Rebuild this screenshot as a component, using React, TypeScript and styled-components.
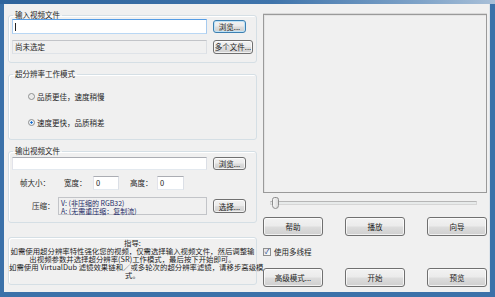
import * as React from 'react';
import styled, { createGlobalStyle, css } from 'styled-components';

const GlobalStyle = createGlobalStyle`
    html, body {
        margin: 0;
        padding: 0;
        background: #f0f0f0;
    }
    body {
        font-family: "Noto Sans CJK SC", "Liberation Sans", sans-serif;
        font-size: 7.5px;
        color: #1e1e1e;
    }
    * {
        box-sizing: border-box;
    }
`;

const Window = styled.div`
    width: 495px;
    height: 297px;
    padding: 4px 5px 5px 4px;
    background:
        linear-gradient(90deg, #2f649c 0%, #3f74ab 55%, #7fa3c8 85%, #a9c0d8 100%) top / 100% 4px no-repeat,
        #3b71a9;
`;

const Client = styled.div`
    height: 100%;
    display: flex;
    padding: 7px 0 0 4px;
    background: #f0f0f0;
    border-right: 1px solid #dde4ea;
`;

const LeftCol = styled.div`
    width: 249px;
    display: flex;
    flex-direction: column;
`;

const RightCol = styled.div`
    width: 224px;
    margin-left: 6px;
    display: flex;
    flex-direction: column;
`;

const Group = styled.fieldset<{ $height: number; $mt?: number }>`
    margin: ${p => p.$mt || 0}px 0 0 0;
    padding: 0;
    height: ${p => p.$height}px;
    border: 1px solid #d5dfe5;
    border-radius: 3px;
    box-shadow: inset 1px 1px 0 #fff;
    min-width: 0;
`;

const Legend = styled.legend`
    margin-left: 4px;
    padding: 0 2px;
    font-size: 7.5px;
    line-height: 8px;
    color: #1e1e1e;
`;

const GroupBody = styled.div<{ $pt?: number; $pl?: number }>`
    padding: ${p => p.$pt || 0}px 0 0 ${p => p.$pl ?? 3}px;
    display: flex;
    flex-direction: column;
`;

const FieldRow = styled.div<{ $mt?: number; $h?: number }>`
    display: flex;
    align-items: center;
    margin-top: ${p => p.$mt || 0}px;
    height: ${p => p.$h || 15}px;
`;

const TextBox = styled.div<{ $w: number; $h: number; $focused?: boolean; $readonly?: boolean }>`
    width: ${p => p.$w}px;
    height: ${p => p.$h}px;
    flex-shrink: 0;
    display: flex;
    align-items: center;
    padding-left: 2px;
    line-height: 8px;
    background: ${p => (p.$readonly ? '#f0f0f0' : '#fff')};
    border: 1px solid #abadb3;
    border-color: #abadb3 #dbdfe6 #e3e9ef #e2e3ea;
    ${p => p.$focused && css`
        border-color: #569de5 #a7cbef #b9d7f4 #a7cbef;
    `}
    ${p => p.$readonly && css`
        border-color: #c2c4c8 #dcdfe3 #dfe3e8 #dcdfe3;
    `}
`;

const Caret = styled.span`
    display: inline-block;
    width: 1px;
    height: 8px;
    background: #222;
`;

const Button = styled.div<{ $w: number; $h: number; $ml?: number; $default?: boolean }>`
    width: ${p => p.$w}px;
    height: ${p => p.$h}px;
    margin-left: ${p => p.$ml ?? 0}px;
    flex-shrink: 0;
    display: flex;
    align-items: center;
    justify-content: center;
    font-size: 7.5px;
    color: #1e1e1e;
    border: 1px solid #707070;
    border-radius: 3px;
    background: linear-gradient(#f2f2f2 0%, #ebebeb 48%, #dddddd 52%, #cfcfcf 100%);
    box-shadow: inset 0 0 0 1px rgba(255, 255, 255, 0.7);
    ${p => p.$default && css`
        border-color: #3c7fb1;
        box-shadow: inset 0 0 0 1px #bfe3f7;
    `}
`;

const RadioRow = styled.div<{ $mt?: number }>`
    display: flex;
    align-items: center;
    height: 10px;
    margin-top: ${p => p.$mt || 0}px;
`;

const RadioDot = styled.span<{ $checked?: boolean }>`
    width: 7px;
    height: 7px;
    margin-right: 2px;
    border-radius: 50%;
    border: 1px solid #8e8f8f;
    background: radial-gradient(circle, ${p => (p.$checked ? '#1a62c4 0, #3b8fe0 35%, #e6eef6 40%' : '#e6e6e6 0')}, #f4f4f4 100%);
`;

const Label = styled.span<{ $ml?: number; $w?: number }>`
    margin-left: ${p => p.$ml || 0}px;
    ${p => p.$w && css`width: ${p.$w}px;`}
    flex-shrink: 0;
    white-space: nowrap;
    line-height: 8px;
`;

const CodecBox = styled.div`
    width: 149px;
    height: 18px;
    margin-left: 8px;
    padding: 1px 0 0 2px;
    flex-shrink: 0;
    background: #f0f0f0;
    border: 1px solid #c2c4c8;
    color: #1f2c66;
    line-height: 8px;
    font-size: 7px;
`;

const GuideBox = styled.div`
    margin-top: 14px;
    height: 48px;
    padding-top: 1px;
    border: 1px solid #d5dfe5;
    border-radius: 3px;
    box-shadow: inset 1px 1px 0 #fff;
    text-align: center;
    font-size: 7.4px;
    line-height: 8px;
`;

const GuideLine = styled.div`
    white-space: nowrap;
`;

const Preview = styled.div`
    margin-top: 3px;
    height: 179px;
    border: 1px solid #9a9a9a;
    box-shadow: 0 -1px 0 #d8d8d8, inset 1px 1px 0 #e4e4e4;
    background: #f0f0f0;
`;

const Slider = styled.div`
    position: relative;
    margin-top: 3px;
    height: 14px;
    padding: 0 10px 0 7px;
    display: flex;
    align-items: center;
`;

const Track = styled.div`
    flex: 1;
    height: 4px;
    border: 1px solid #d6d6d6;
    border-top-color: #b6b6b6;
    background: #e7eaea;
`;

const Thumb = styled.div`
    position: absolute;
    left: 9px;
    top: 1px;
    width: 7px;
    height: 12px;
    border: 1px solid #8c8c8c;
    border-radius: 3px 3px 4px 4px;
    background: linear-gradient(90deg, #f6f6f6, #dcdcdc);
`;

const ButtonRow = styled.div<{ $mt: number }>`
    display: flex;
    justify-content: space-between;
    margin-top: ${p => p.$mt}px;
`;

const CheckRow = styled.div`
    display: flex;
    align-items: center;
    margin-top: 11px;
    height: 9px;
`;

const CheckBox = styled.span`
    width: 8px;
    height: 8px;
    margin-right: 3px;
    border: 1px solid #8e8f8f;
    background: linear-gradient(135deg, #e4e4e4, #fafafa);
    display: flex;
    align-items: center;
    justify-content: center;
    color: #1c3f8f;
    font-size: 7px;
    line-height: 7px;
`;

const App = () => (
    <>
        <GlobalStyle />
        <Window>
            <Client>
                <LeftCol>
                    <Group $height={52}>
                        <Legend>输入视频文件</Legend>
                        <GroupBody>
                            <FieldRow>
                                <TextBox $w={195} $h={15} $focused>
                                    <Caret />
                                </TextBox>
                                <Button $w={33} $h={13} $ml={6} $default>浏览...</Button>
                            </FieldRow>
                            <FieldRow $mt={5}>
                                <TextBox $w={195} $h={14} $readonly>尚未选定</TextBox>
                                <Button $w={40} $h={14} $ml={6}>多个文件...</Button>
                            </FieldRow>
                        </GroupBody>
                    </Group>

                    <Group $height={70} $mt={7}>
                        <Legend>超分辨率工作模式</Legend>
                        <GroupBody $pt={13} $pl={19}>
                            <RadioRow>
                                <RadioDot />
                                品质更佳，速度稍慢
                            </RadioRow>
                            <RadioRow $mt={16}>
                                <RadioDot $checked />
                                速度更快，品质稍差
                            </RadioRow>
                        </GroupBody>
                    </Group>

                    <Group $height={76} $mt={7}>
                        <Legend>输出视频文件</Legend>
                        <GroupBody $pt={2}>
                            <FieldRow $h={13}>
                                <TextBox $w={195} $h={13} />
                                <Button $w={33} $h={13} $ml={6}>浏览...</Button>
                            </FieldRow>
                            <FieldRow $mt={6} $h={14}>
                                <Label $ml={8} $w={28}>帧大小：</Label>
                                <Label $ml={16} $w={29}>宽度：</Label>
                                <TextBox $w={26} $h={14}>0</TextBox>
                                <Label $ml={11} $w={27}>高度：</Label>
                                <TextBox $w={27} $h={14}>0</TextBox>
                            </FieldRow>
                            <FieldRow $mt={7} $h={18}>
                                <Label $ml={20} $w={18}>压缩：</Label>
                                <CodecBox>
                                    V: (非压缩的 RGB32)<br />
                                    A: (无需重压缩：复制流)
                                </CodecBox>
                                <Button $w={33} $h={14} $ml={6}>选择...</Button>
                            </FieldRow>
                        </GroupBody>
                    </Group>

                    <GuideBox>
                        <GuideLine>指导:</GuideLine>
                        <GuideLine>如需使用超分辨率特性强化您的视频，仅需选择输入视频文件，然后调整输</GuideLine>
                        <GuideLine>出视频参数并选择超分辨率(SR)工作模式，最后按下开始即可。</GuideLine>
                        <GuideLine>如需使用 VirtualDub 滤镜效果链和／或多轮次的超分辨率滤镜，请移步高级模</GuideLine>
                        <GuideLine>式。</GuideLine>
                    </GuideBox>
                </LeftCol>

                <RightCol>
                    <Preview />
                    <Slider>
                        <Track />
                        <Thumb />
                    </Slider>
                    <ButtonRow $mt={7}>
                        <Button $w={60} $h={19}>帮助</Button>
                        <Button $w={60} $h={19}>播放</Button>
                        <Button $w={60} $h={19}>向导</Button>
                    </ButtonRow>
                    <CheckRow>
                        <CheckBox>✓</CheckBox>
                        使用多线程
                    </CheckRow>
                    <ButtonRow $mt={12}>
                        <Button $w={60} $h={19}>高级模式...</Button>
                        <Button $w={60} $h={19}>开始</Button>
                        <Button $w={60} $h={19}>预览</Button>
                    </ButtonRow>
                </RightCol>
            </Client>
        </Window>
    </>
);

export default App;
